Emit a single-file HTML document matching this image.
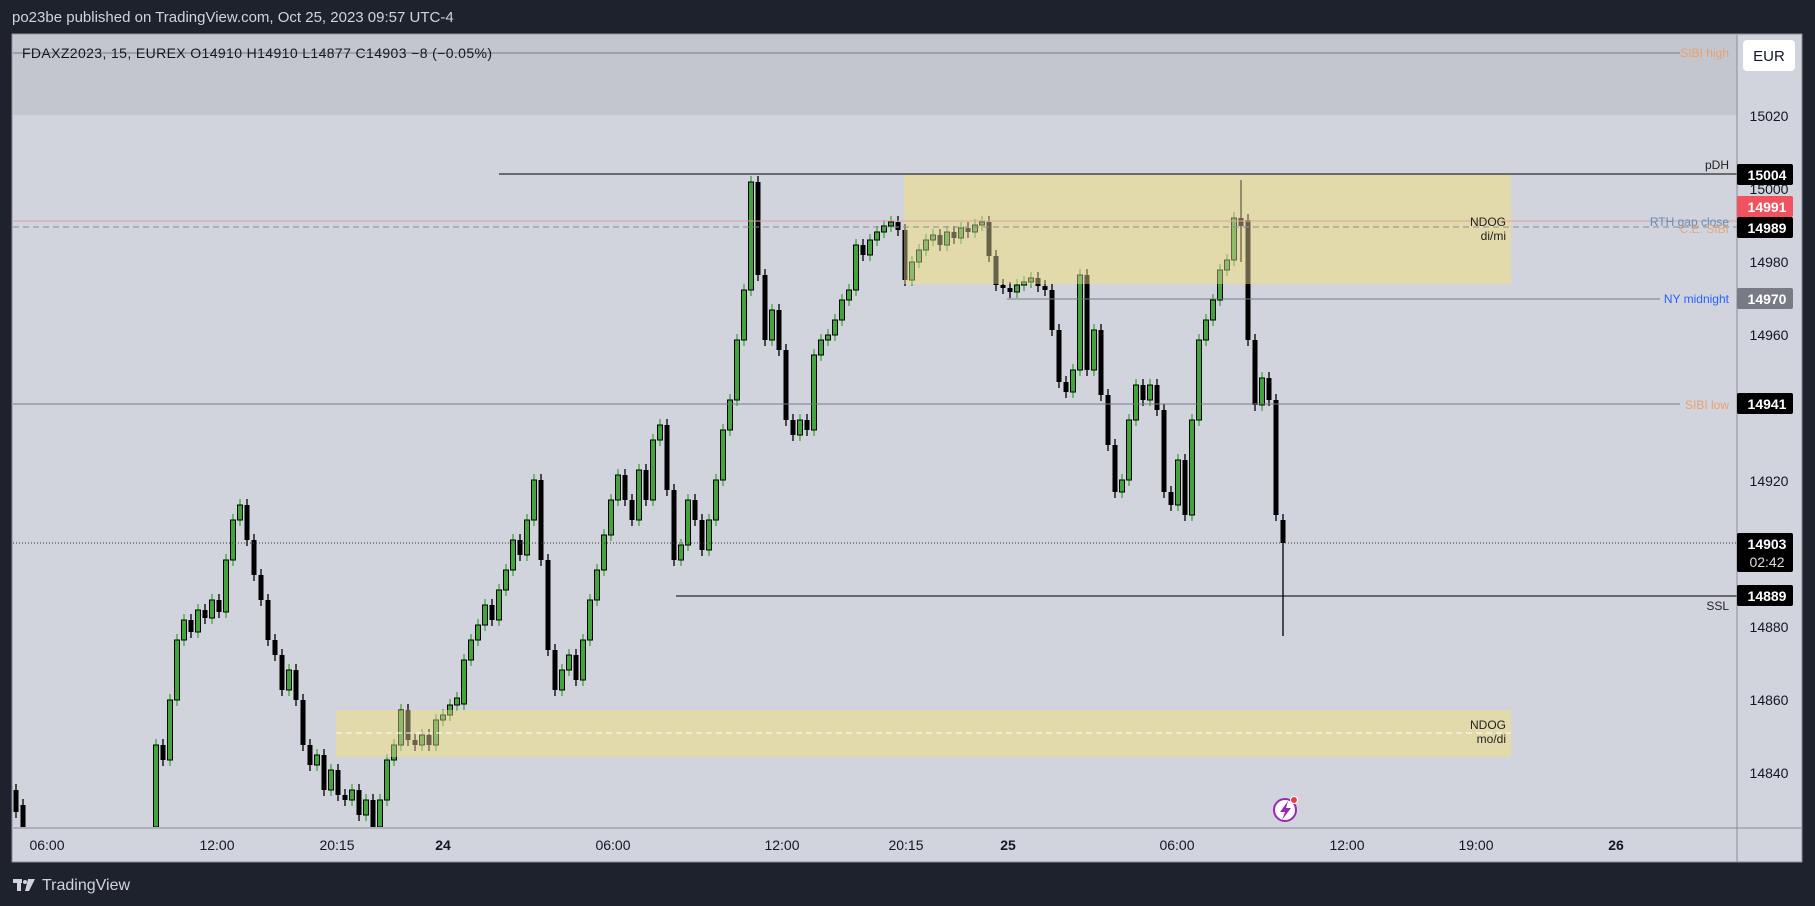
<!DOCTYPE html>
<html><head><meta charset="utf-8"><style>
body{margin:0;width:1815px;height:906px;background:#1e222d;overflow:hidden;font-family:"Liberation Sans",sans-serif}
.t{position:absolute}
</style></head><body>
<div class="t" style="left:12px;top:9px;color:#d1d4dc;font-size:15px;">po23be published on TradingView.com, Oct 25, 2023 09:57 UTC-4</div>
<svg class="t" style="left:0;top:0" width="1815" height="906" xmlns="http://www.w3.org/2000/svg" font-family="Liberation Sans, sans-serif">
<defs><clipPath id="pl"><rect x="13" y="35" width="1724" height="792"/></clipPath></defs>
<rect x="12" y="34" width="1790" height="828" fill="#d1d4dc" stroke="#8a8d96"/>
<rect x="13" y="35" width="1724" height="80" fill="#c3c6cd"/>
<rect x="904" y="175" width="607" height="109" fill="#dfd9b2"/>
<rect x="336" y="710" width="1175" height="47" fill="#dfd9b2"/>
<g clip-path="url(#pl)">
<path stroke="#43a33c" stroke-width="1.3" fill="none" d="M156,739V833M170,694V766M177,634V706M184,614V646M198,604V638M212,594V624M226,554V618M233,514V566M240,499V526M289,664V696M317,749V771M331,764V796M352,784V806M366,794V821M380,794V833M387,754V806M394,739V766M401,704V751M422,729V751M436,714V751M443,709V726M450,699V721M457,692V711M464,654V710M471,634V666M478,619V646M485,599V631M499,584V626M506,564V596M513,534V576M527,514V561M534,474V526M562,664V696M569,649V676M583,634V686M590,594V646M597,564V606M604,529V576M611,494V541M618,469V506M639,464V526M653,434V506M660,419V446M681,539V566M688,494V551M709,514V556M716,474V526M723,424V486M730,394V436M737,334V406M744,284V346M751,176V296M772,304V346M800,414V441M814,349V436M821,334V361M828,329V346M835,314V341M842,294V326M849,284V306M856,239V296M870,234V261M877,226V246M884,220V238M891,216V232M912,256V286M919,244V268M926,234V256M933,229V246M947,226V251M961,222V244M975,219V238M982,216V231M1017,279V298M1024,276V291M1031,272V288M1073,364V398M1080,269V376M1094,324V376M1122,474V498M1129,414V486M1136,379V426M1150,379V406M1178,454V511M1192,414V521M1199,334V426M1206,314V346M1213,294V326M1220,264V306M1227,254V276M1234,212V266M1262,372V411"/>
<path stroke="#000" stroke-width="1.3" fill="none" d="M16,784V818M23,799V833M163,739V766M191,614V638M205,604V624M219,594V618M247,499V546M254,534V581M261,569V606M268,594V646M275,634V661M282,649V696M296,664V706M303,694V751M310,739V771M324,749V796M338,764V801M345,789V806M359,784V821M373,794V833M408,704V746M415,734V751M429,729V751M492,599V626M520,534V561M541,474V566M548,554V656M555,644V696M576,649V686M625,469V506M632,494V526M646,464V506M667,419V496M674,484V566M695,494V526M702,514V556M758,176V281M765,269V346M779,304V356M786,344V426M793,414V441M807,414V436M863,239V261M898,216V236M905,224V286M940,229V251M954,226V244M968,222V238M989,216V262M996,250V291M1003,279V294M1010,282V298M1038,272V292M1045,280V296M1052,284V336M1059,324V388M1066,376V398M1087,269V376M1101,324V401M1108,389V451M1115,439V498M1143,379V406M1157,379V416M1164,404V498M1171,486V511M1185,454V521M1241,180V262M1248,214V346M1255,334V411M1269,372V406M1276,394V521M1283,514V636"/>
<path stroke="#000" stroke-width="1" fill="#43a33c" d="M153.5,745h5V827h-5ZM167.5,700h5V760h-5ZM174.5,640h5V700h-5ZM181.5,620h5V640h-5ZM195.5,610h5V632h-5ZM209.5,600h5V618h-5ZM223.5,560h5V612h-5ZM230.5,520h5V560h-5ZM237.5,505h5V520h-5ZM286.5,670h5V690h-5ZM314.5,755h5V765h-5ZM328.5,770h5V790h-5ZM349.5,790h5V800h-5ZM363.5,800h5V815h-5ZM377.5,800h5V827h-5ZM384.5,760h5V800h-5ZM391.5,745h5V760h-5ZM398.5,710h5V745h-5ZM419.5,735h5V745h-5ZM433.5,720h5V745h-5ZM440.5,715h5V720h-5ZM447.5,705h5V715h-5ZM454.5,698h5V705h-5ZM461.5,660h5V704h-5ZM468.5,640h5V660h-5ZM475.5,625h5V640h-5ZM482.5,605h5V625h-5ZM496.5,590h5V620h-5ZM503.5,570h5V590h-5ZM510.5,540h5V570h-5ZM524.5,520h5V555h-5ZM531.5,480h5V520h-5ZM559.5,670h5V690h-5ZM566.5,655h5V670h-5ZM580.5,640h5V680h-5ZM587.5,600h5V640h-5ZM594.5,570h5V600h-5ZM601.5,535h5V570h-5ZM608.5,500h5V535h-5ZM615.5,475h5V500h-5ZM636.5,470h5V520h-5ZM650.5,440h5V500h-5ZM657.5,425h5V440h-5ZM678.5,545h5V560h-5ZM685.5,500h5V545h-5ZM706.5,520h5V550h-5ZM713.5,480h5V520h-5ZM720.5,430h5V480h-5ZM727.5,400h5V430h-5ZM734.5,340h5V400h-5ZM741.5,290h5V340h-5ZM748.5,182h5V290h-5ZM769.5,310h5V340h-5ZM797.5,420h5V435h-5ZM811.5,355h5V430h-5ZM818.5,340h5V355h-5ZM825.5,335h5V340h-5ZM832.5,320h5V335h-5ZM839.5,300h5V320h-5ZM846.5,290h5V300h-5ZM853.5,245h5V290h-5ZM867.5,240h5V255h-5ZM874.5,232h5V240h-5ZM881.5,226h5V232h-5ZM888.5,222h5V226h-5ZM909.5,262h5V280h-5ZM916.5,250h5V262h-5ZM923.5,240h5V250h-5ZM930.5,235h5V240h-5ZM944.5,232h5V245h-5ZM958.5,228h5V238h-5ZM972.5,225h5V232h-5ZM979.5,222h5V225h-5ZM1014.5,285h5V292h-5ZM1021.5,282h5V285h-5ZM1028.5,278h5V282h-5ZM1070.5,370h5V392h-5ZM1077.5,275h5V370h-5ZM1091.5,330h5V370h-5ZM1119.5,480h5V492h-5ZM1126.5,420h5V480h-5ZM1133.5,385h5V420h-5ZM1147.5,385h5V400h-5ZM1175.5,460h5V505h-5ZM1189.5,420h5V515h-5ZM1196.5,340h5V420h-5ZM1203.5,320h5V340h-5ZM1210.5,300h5V320h-5ZM1217.5,270h5V300h-5ZM1224.5,260h5V270h-5ZM1231.5,218h5V260h-5ZM1259.5,378h5V405h-5Z"/>
<path fill="#000" d="M13.5,790h5V812h-5ZM20.5,805h5V827h-5ZM160.5,745h5V760h-5ZM188.5,620h5V632h-5ZM202.5,610h5V618h-5ZM216.5,600h5V612h-5ZM244.5,505h5V540h-5ZM251.5,540h5V575h-5ZM258.5,575h5V600h-5ZM265.5,600h5V640h-5ZM272.5,640h5V655h-5ZM279.5,655h5V690h-5ZM293.5,670h5V700h-5ZM300.5,700h5V745h-5ZM307.5,745h5V765h-5ZM321.5,755h5V790h-5ZM335.5,770h5V795h-5ZM342.5,795h5V800h-5ZM356.5,790h5V815h-5ZM370.5,800h5V827h-5ZM405.5,710h5V740h-5ZM412.5,740h5V745h-5ZM426.5,735h5V745h-5ZM489.5,605h5V620h-5ZM517.5,540h5V555h-5ZM538.5,480h5V560h-5ZM545.5,560h5V650h-5ZM552.5,650h5V690h-5ZM573.5,655h5V680h-5ZM622.5,475h5V500h-5ZM629.5,500h5V520h-5ZM643.5,470h5V500h-5ZM664.5,425h5V490h-5ZM671.5,490h5V560h-5ZM692.5,500h5V520h-5ZM699.5,520h5V550h-5ZM755.5,182h5V275h-5ZM762.5,275h5V340h-5ZM776.5,310h5V350h-5ZM783.5,350h5V420h-5ZM790.5,420h5V435h-5ZM804.5,420h5V430h-5ZM860.5,245h5V255h-5ZM895.5,222h5V230h-5ZM902.5,230h5V280h-5ZM937.5,235h5V245h-5ZM951.5,232h5V238h-5ZM965.5,228h5V232h-5ZM986.5,222h5V256h-5ZM993.5,256h5V285h-5ZM1000.5,285h5V288h-5ZM1007.5,288h5V292h-5ZM1035.5,278h5V286h-5ZM1042.5,286h5V290h-5ZM1049.5,290h5V330h-5ZM1056.5,330h5V382h-5ZM1063.5,382h5V392h-5ZM1084.5,275h5V370h-5ZM1098.5,330h5V395h-5ZM1105.5,395h5V445h-5ZM1112.5,445h5V492h-5ZM1140.5,385h5V400h-5ZM1154.5,385h5V410h-5ZM1161.5,410h5V492h-5ZM1168.5,492h5V505h-5ZM1182.5,460h5V515h-5ZM1238.5,218h5V226h-5ZM1245.5,220h5V340h-5ZM1252.5,340h5V405h-5ZM1266.5,378h5V400h-5ZM1273.5,400h5V515h-5ZM1280.5,520h5V543h-5Z"/>
</g>
<rect x="904" y="175" width="607" height="109" fill="#e6dba0" opacity="0.45"/>
<rect x="336" y="710" width="1175" height="47" fill="#e6dba0" opacity="0.45"/>
<line x1="13" y1="53" x2="1680" y2="53" stroke="#787b86"/>
<line x1="499" y1="174" x2="1737" y2="174" stroke="#000"/>
<line x1="13" y1="221" x2="1737" y2="221" stroke="#e0a0a0"/>
<line x1="13" y1="227" x2="1737" y2="227" stroke="#8a8d96" stroke-dasharray="6 4"/>
<line x1="336" y1="733" x2="1511" y2="733" stroke="#fff" stroke-dasharray="6 4"/>
<line x1="1007" y1="299" x2="1660" y2="299" stroke="#787b86"/>
<line x1="13" y1="404" x2="1680" y2="404" stroke="#787b86"/>
<line x1="13" y1="543" x2="1737" y2="543" stroke="#333" stroke-dasharray="1 2"/>
<line x1="676" y1="596" x2="1737" y2="596" stroke="#000"/>
<line x1="1737" y1="35" x2="1737" y2="862" stroke="#8a8d96"/>
<line x1="13" y1="828" x2="1802" y2="828" stroke="#8a8d96"/>
<g font-size="12" text-anchor="end">
<text x="1729" y="57" fill="#e8a070">SIBI high</text>
<text x="1729" y="169" fill="#222">pDH</text>
<text x="1729" y="226" fill="#5a8fc0">RTH gap close</text>
<text x="1729" y="233" fill="#e8a070" opacity="0.8">C.E. SIBI</text>
<text x="1729" y="303" fill="#2962ff">NY midnight</text>
<text x="1729" y="409" fill="#e8a070">SIBI low</text>
<text x="1729" y="610" fill="#222">SSL</text>
<text x="1506" y="226" fill="#222">NDOG</text><text x="1506" y="240" fill="#222">di/mi</text>
<text x="1506" y="729" fill="#222">NDOG</text><text x="1506" y="743" fill="#222">mo/di</text>
</g>
<text x="22" y="58" font-size="14" fill="#131722" textLength="470">FDAXZ2023, 15, EUREX  O14910  H14910  L14877  C14903  −8 (−0.05%)</text>
<rect x="1743" y="40" width="52" height="31" rx="4" fill="#fff"/>
<text x="1769" y="61" font-size="15" fill="#131722" text-anchor="middle">EUR</text>
<g font-size="14" fill="#131722" text-anchor="middle">
<text x="1769" y="121">15020</text><text x="1769" y="194">15000</text><text x="1769" y="267">14980</text>
<text x="1769" y="340">14960</text><text x="1769" y="486">14920</text><text x="1769" y="632">14880</text>
<text x="1769" y="705">14860</text><text x="1769" y="778">14840</text>
</g>
<g font-size="14" font-weight="bold" fill="#fff" text-anchor="middle">
<rect x="1737" y="164" width="56" height="21" rx="2" fill="#000"/><text x="1767" y="180">15004</text>
<rect x="1737" y="196" width="56" height="21" rx="2" fill="#f0525f"/><text x="1767" y="212">14991</text>
<rect x="1737" y="217" width="56" height="21" rx="2" fill="#000"/><text x="1767" y="233">14989</text>
<rect x="1737" y="288" width="56" height="21" rx="2" fill="#787b86"/><text x="1767" y="304">14970</text>
<rect x="1737" y="393" width="56" height="21" rx="2" fill="#000"/><text x="1767" y="409">14941</text>
<rect x="1737" y="533" width="56" height="39" rx="2" fill="#000"/><text x="1767" y="549">14903</text>
<text x="1767" y="567" font-weight="normal" fill="#ddd">02:42</text>
<rect x="1737" y="585" width="56" height="21" rx="2" fill="#000"/><text x="1767" y="601">14889</text>
</g>
<g font-size="14" fill="#131722" text-anchor="middle">
<text x="47" y="850">06:00</text><text x="217" y="850">12:00</text><text x="337" y="850">20:15</text>
<text x="443" y="850" font-weight="bold">24</text><text x="613" y="850">06:00</text><text x="782" y="850">12:00</text>
<text x="906" y="850">20:15</text><text x="1008" y="850" font-weight="bold">25</text><text x="1177" y="850">06:00</text>
<text x="1347" y="850">12:00</text><text x="1476" y="850">19:00</text><text x="1616" y="850" font-weight="bold">26</text>
</g>
<circle cx="1285" cy="810" r="11" fill="#fff" stroke="#9c27b0" stroke-width="2"/>
<path d="M1288 801 L1280 812 L1285 812 L1282 820 L1291 808 L1286 808 Z" fill="#9c27b0"/>
<circle cx="1294" cy="800" r="3.5" fill="#f23645" stroke="#fff"/>
<g fill="#d1d4dc"><rect x="13" y="879" width="9" height="4"/><rect x="17" y="879" width="4" height="12"/><circle cx="25" cy="882" r="2"/><path d="M28 879 L35 879 L29 891 L25 891 Z"/></g>
<text x="42" y="890" font-size="16" fill="#d1d4dc">TradingView</text>
</svg>
</body></html>
